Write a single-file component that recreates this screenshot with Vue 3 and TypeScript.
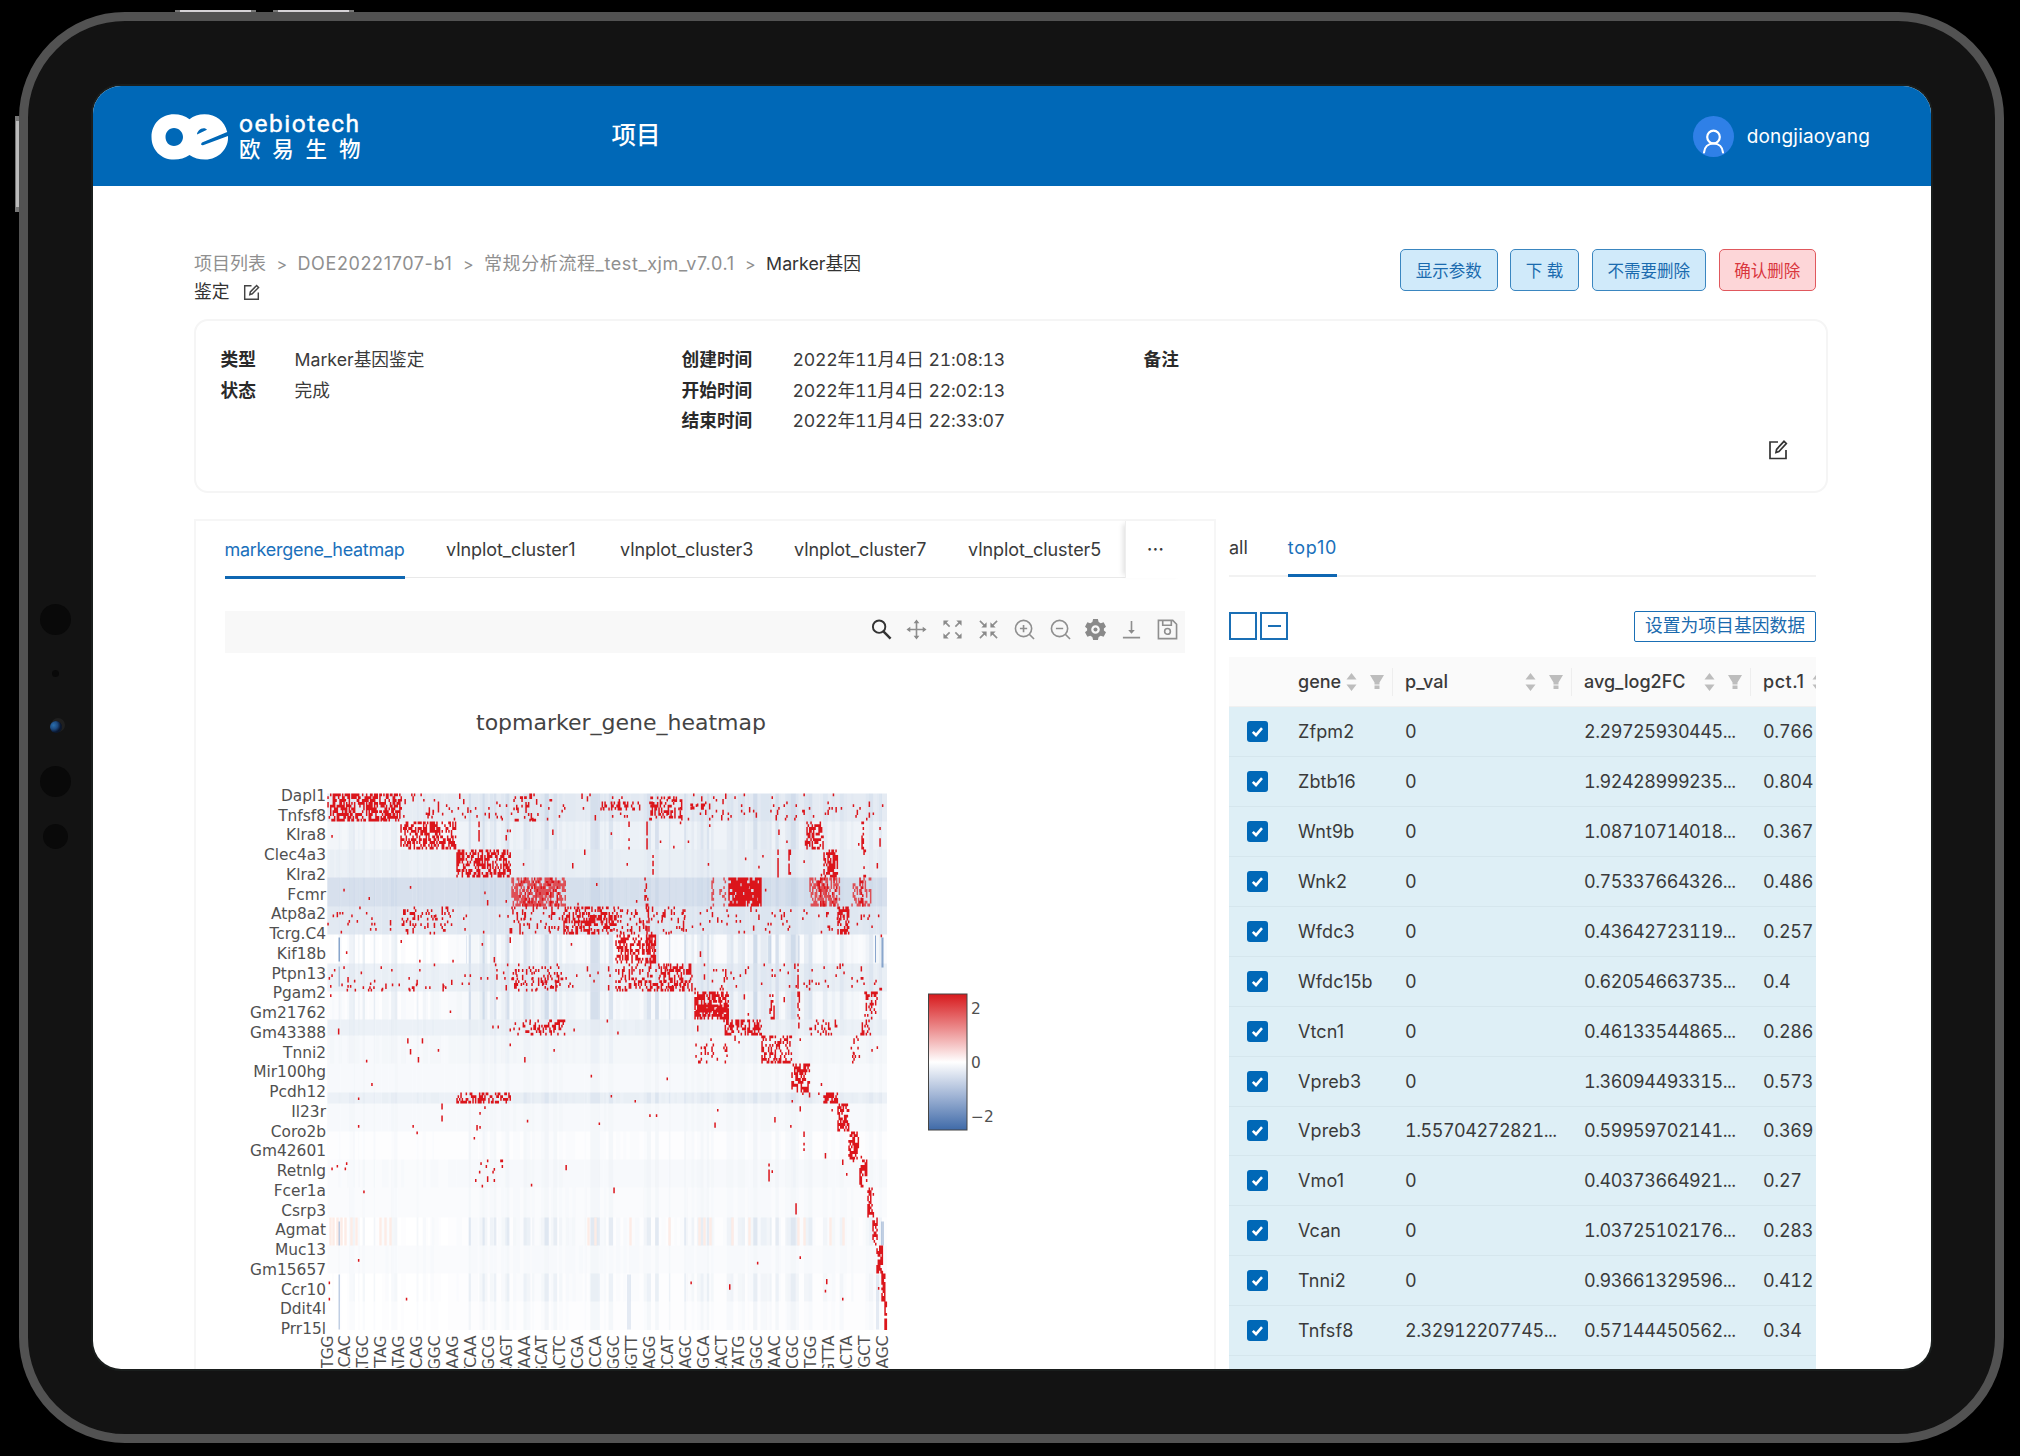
<script setup lang="ts">
interface Block { b: number; x0: number; x1: number; d: number; y0?: number; y1?: number; soft?: boolean }
interface Band { y0: number; y1: number; base: number; amp: number; noise: number }

const rows: string[][] = [
  ['Zfpm2', '0', '2.29725930445...', '0.766'],
  ['Zbtb16', '0', '1.92428999235...', '0.804'],
  ['Wnt9b', '0', '1.08710714018...', '0.367'],
  ['Wnk2', '0', '0.75337664326...', '0.486'],
  ['Wfdc3', '0', '0.43642723119...', '0.257'],
  ['Wfdc15b', '0', '0.62054663735...', '0.4'],
  ['Vtcn1', '0', '0.46133544865...', '0.286'],
  ['Vpreb3', '0', '1.36094493315...', '0.573'],
  ['Vpreb3', '1.55704272821...', '0.59959702141...', '0.369'],
  ['Vmo1', '0', '0.40373664921...', '0.27'],
  ['Vcan', '0', '1.03725102176...', '0.283'],
  ['Tnni2', '0', '0.93661329596...', '0.412'],
  ['Tnfsf8', '2.32912207745...', '0.57144450562...', '0.34'],
  ['', '', '', ''],
]
const columns = [
  { name: 'gene', cls: 'c-gene' },
  { name: 'p_val', cls: 'c-val' },
  { name: 'avg_log2FC', cls: 'c-val' },
]
const tabs = ['markergene_heatmap', 'vlnplot_cluster1', 'vlnplot_cluster3', 'vlnplot_cluster7', 'vlnplot_cluster5']
const times = [
  ['创建时间', '2022年11月4日 21:08:13'],
  ['开始时间', '2022年11月4日 22:02:13'],
  ['结束时间', '2022年11月4日 22:33:07'],
]

const yLabels = ['Dapl1', 'Tnfsf8', 'Klra8', 'Clec4a3', 'Klra2', 'Fcmr', 'Atp8a2', 'Tcrg.C4', 'Kif18b', 'Ptpn13', 'Pgam2', 'Gm21762', 'Gm43388', 'Tnni2', 'Mir100hg', 'Pcdh12', 'Il23r', 'Coro2b', 'Gm42601', 'Retnlg', 'Fcer1a', 'Csrp3', 'Agmat', 'Muc13', 'Gm15657', 'Ccr10', 'Ddit4l', 'Prr15l']
const xLabels = ['CTGG', 'ACAC', 'ATGC', 'TTAG', 'ATAG', 'ACAG', 'GGGC', 'GAAG', 'TCAA', 'GGCG', 'CAGT', 'TAAA', 'GCAT', 'ACTC', 'CCGA', 'ACCA', 'GGGC', 'GGTT', 'CAGG', 'CCAT', 'AAGC', 'AGCA', 'CACT', 'TATG', 'GGGC', 'TAAC', 'TCGC', 'GTGG', 'GTTA', 'ACTA', 'TGCT', 'AAGC']

const bands: Band[] = [
  { y0: 0, y1: 28, base: 0.12, amp: 0.1, noise: 0.045 },
  { y0: 28, y1: 56, base: 0.06, amp: 0.14, noise: 0.006 },
  { y0: 56, y1: 84, base: 0.1, amp: 0.06, noise: 0.003 },
  { y0: 84, y1: 113, base: 0.2, amp: 0.06, noise: 0.004 },
  { y0: 113, y1: 141, base: 0.15, amp: 0.04, noise: 0.04 },
  { y0: 141, y1: 170, base: 0, amp: 0.22, noise: 0.003 },
  { y0: 170, y1: 198, base: 0.09, amp: 0.12, noise: 0.04 },
  { y0: 198, y1: 226, base: 0.02, amp: 0.2, noise: 0.002 },
  { y0: 226, y1: 242, base: 0.09, amp: 0.05, noise: 0.004 },
  { y0: 242, y1: 270, base: 0.045, amp: 0.05, noise: 0.006 },
  { y0: 270, y1: 299, base: 0.035, amp: 0.03, noise: 0.001 },
  { y0: 299, y1: 310, base: 0.09, amp: 0.08, noise: 0.008 },
  { y0: 310, y1: 338, base: 0.04, amp: 0.02, noise: 0.004 },
  { y0: 338, y1: 366, base: 0.01, amp: 0.05, noise: 0.001 },
  { y0: 366, y1: 394, base: 0.03, amp: 0.04, noise: 0.004 },
  { y0: 394, y1: 424, base: 0.025, amp: 0.03, noise: 0.001 },
  { y0: 424, y1: 452, base: 0, amp: 0.15, noise: 0.0005 },
  { y0: 452, y1: 480, base: 0.03, amp: 0.02, noise: 0.001 },
  { y0: 480, y1: 508, base: 0.0, amp: 0.11, noise: 0.004 },
  { y0: 508, y1: 536.5, base: 0.0, amp: 0.06, noise: 0 },
]
const blocks: Block[] = [
  { b: 0, x0: 0, x1: 73, d: 0.62 }, { b: 0, x0: 186, x1: 213, d: 0.2 }, { b: 0, x0: 273, x1: 313, d: 0.35, y0: 8, y1: 17 },
  { b: 0, x0: 323, x1: 355, d: 0.35, y0: 3, y1: 25 }, { b: 0, x0: 323, x1: 335, d: 0.6, y0: 8, y1: 17 }, { b: 0, x0: 363, x1: 384, d: 0.4, y0: 10, y1: 16 },
  { b: 0, x0: 100, x1: 180, d: 0.1, y0: 8, y1: 25 },
  { b: 1, x0: 73, x1: 129, d: 0.52 }, { b: 1, x0: 151, x1: 152, d: 1, y0: 28, y1: 48 }, { b: 1, x0: 301, x1: 302.4, d: 0.5 },
  { b: 1, x0: 319, x1: 320.4, d: 0.9 }, { b: 1, x0: 479, x1: 496, d: 0.55 }, { b: 1, x0: 534, x1: 536, d: 0.5 }, { b: 1, x0: 552, x1: 553.4, d: 0.5 },
  { b: 2, x0: 129, x1: 184, d: 0.55 }, { b: 2, x0: 496, x1: 510, d: 0.62 }, { b: 2, x0: 450, x1: 451.4, d: 0.6 }, { b: 2, x0: 461, x1: 463, d: 0.6 },
  { b: 2, x0: 325, x1: 326, d: 0.7 }, { b: 2, x0: 536, x1: 540, d: 0.3 },
  { b: 3, x0: 184, x1: 238, d: 0.62, soft: true }, { b: 3, x0: 192, x1: 232, d: 0.25 }, { b: 3, x0: 401, x1: 434, d: 0.9 }, { b: 3, x0: 482, x1: 512, d: 0.6, soft: true },
  { b: 3, x0: 490, x1: 510, d: 0.2 },
  { b: 3, x0: 524, x1: 544, d: 0.35, soft: true }, { b: 3, x0: 532, x1: 536, d: 0.6 }, { b: 3, x0: 317, x1: 321, d: 0.4 }, { b: 3, x0: 384, x1: 386, d: 0.6, soft: true }, { b: 3, x0: 392, x1: 399, d: 0.25, soft: true },
  { b: 4, x0: 236, x1: 289, d: 0.45 }, { b: 4, x0: 289, x1: 360, d: 0.15 }, { b: 4, x0: 73, x1: 128, d: 0.16 }, { b: 4, x0: 510, x1: 522, d: 0.5 },
  { b: 4, x0: 180, x1: 236, d: 0.1 }, { b: 4, x0: 319, x1: 322, d: 0.5 },
  { b: 5, x0: 288, x1: 328, d: 0.38 }, { b: 5, x0: 318, x1: 328, d: 0.5 },
  { b: 6, x0: 328, x1: 365, d: 0.42 }, { b: 6, x0: 288, x1: 328, d: 0.28 }, { b: 6, x0: 184, x1: 236, d: 0.18 }, { b: 6, x0: 470, x1: 471.4, d: 0.6 },
  { b: 6, x0: 10, x1: 120, d: 0.12, y0: 190, y1: 198 },
  { b: 7, x0: 367, x1: 401, d: 0.6 }, { b: 7, x0: 367, x1: 401, d: 0.95, y0: 211, y1: 219 }, { b: 7, x0: 470, x1: 472, d: 0.6 },
  { b: 7, x0: 442, x1: 447, d: 0.3 }, { b: 7, x0: 537, x1: 550, d: 0.3 },
  { b: 8, x0: 186, x1: 238, d: 0.32 }, { b: 8, x0: 396, x1: 434, d: 0.45 }, { b: 8, x0: 482, x1: 510, d: 0.25 }, { b: 8, x0: 533, x1: 544, d: 0.35 },
  { b: 9, x0: 368, x1: 400, d: 0.2, y0: 250, y1: 270 }, { b: 9, x0: 434, x1: 464, d: 0.4 }, { b: 9, x0: 522, x1: 532, d: 0.16 },
  { b: 10, x0: 464, x1: 482, d: 0.6 },
  { b: 11, x0: 129, x1: 184, d: 0.55 }, { b: 11, x0: 496, x1: 510, d: 0.62 },
  { b: 12, x0: 510, x1: 522, d: 0.62 }, { b: 12, x0: 114, x1: 115.4, d: 0.6, y1: 328 }, { b: 12, x0: 152, x1: 153.4, d: 0.6 },
  { b: 13, x0: 521, x1: 532, d: 0.62 }, { b: 13, x0: 476, x1: 477.4, d: 0.5 },
  { b: 14, x0: 532, x1: 540, d: 0.55 }, { b: 14, x0: 441, x1: 442, d: 0.9, y0: 370, y1: 388 }, { b: 14, x0: 145, x1: 175, d: 0.05 },
  { b: 15, x0: 540, x1: 546, d: 0.6 }, { b: 15, x0: 468, x1: 469, d: 1, y0: 407, y1: 421 },
  { b: 16, x0: 545, x1: 550, d: 0.7 }, { b: 17, x0: 549, x1: 555, d: 0.7 }, { b: 18, x0: 554, x1: 558, d: 0.8 }, { b: 19, x0: 557, x1: 559.5, d: 0.85 },
]

let seed = 20221104
function rnd(): number {
  seed = (seed * 1664525 + 1013904223) >>> 0
  return seed / 4294967296
}
const OX = 327.3, OY = 794, CW = 1.33, RH = 2.8, W = 559.7

function cells(x0: number, x1: number, y0: number, y1: number, d: number): string {
  let s = ''
  const n = Math.max(1, Math.round((x1 - x0) / CW))
  const m = Math.max(1, Math.round((y1 - y0) / RH))
  const rh = (y1 - y0) / m
  for (let r = 0; r < m; r++) {
    for (let c = 0; c < n; c++) {
      if (rnd() < d) s += `M${(OX + x0 + c * CW).toFixed(1)} ${(OY + y0 + r * rh).toFixed(1)}h1.5v${(rh + (r < m - 1 && rnd() < 0.2 ? rh : 0)).toFixed(1)}h-1.5z`
    }
  }
  return s
}
let redPath = ''
let softPath = ''
for (const k of blocks) {
  const band = bands[k.b]
  const y1 = Math.min(k.y1 ?? band.y1, band.y1)
  const p = cells(k.x0, k.x1, k.y0 ?? band.y0, y1, k.d * 0.88)
  if (k.soft) softPath += p
  else redPath += p
}
for (const b of bands) redPath += cells(0, W - 1, b.y0, b.y1 - 1, b.noise * 0.8)

const stripes: { x: number; w: number; s: number }[] = []
for (let x = 0; x < W;) {
  const w = Math.min(1.3 + rnd() * 3.2, W - x)
  const r = rnd()
  const s = (x > 120 ? 0.12 : 0) + r * r * r * (x < 120 ? 0.55 : 1)
  stripes.push({ x, w, s })
  x += w
}
const tintPaths: string[] = Array.from({ length: 24 }, () => '')
for (const b of bands) {
  for (const t of stripes) {
    const i = Math.min(23, Math.round((b.base + b.amp * t.s) / 0.0135))
    if (i > 0) tintPaths[i] += `M${(OX + t.x).toFixed(1)} ${OY + b.y0}h${t.w.toFixed(1)}V${OY + b.y1}h${(-t.w).toFixed(1)}z`
  }
}
let pinkPath = ''
for (const x of [2, 5, 9, 13, 17, 23, 28, 52, 57, 62, 260, 267, 302, 341, 371, 376, 382, 404, 421, 470, 476, 502, 515]) {
  pinkPath += `M${OX + x} ${OY + 424}h2.4v28h-2.4z`
}
</script>

<template>
  <div class="stage">
    <i class="hw top a"></i><i class="hw top b"></i><i class="hw side"></i>
    <div class="device">
      <i class="lens l1"></i><i class="lens l2"></i><i class="cam"></i><i class="lens l3"></i><i class="lens l4"></i>
      <div class="screen">
        <header class="head">
          <div class="logo">
            <svg width="78" height="46" viewBox="0 0 78 46">
              <path fill="#fff" fill-rule="evenodd" d="M23 .3C29 .3 34 2 38.500 5.300C42.500 2 47.500.3 53.500.3C65 .3 73.500 7 76.200 18L51 28.500C49.500 30 50 31.600 52 31.200L77 22C78 34 68 45.600 54 45.600C48 45.600 43 44 38.500 41C34 44 29 45.600 23 45.600C10 45.600.5 36 .5 23S10 .3 23 .3ZM23 14C18 14 14.500 18 14.500 23S18 32 23 32S32 28 32 23S28 14 23 14ZM46 20.500L56 15.800C55 13.500 50 13.600 48 16.200C46.500 18 46 19 46 20.500Z" />
            </svg>
            <div class="brand"><b>oebiotech</b><span>欧易生物</span></div>
          </div>
          <nav>项目</nav>
          <div class="user">
            <svg width="41" height="41" viewBox="0 0 41 41"><circle cx="20.500" cy="20.500" r="20.500" fill="#2f80e7" /><g fill="none" stroke="#fff" stroke-width="2.200" stroke-linecap="round"><circle cx="20.500" cy="21" r="6.300" /><path d="M11 36.500C11.500 31 15 27.500 20.500 27.500S29.500 31 30 36.500" /></g></svg>
            <span>dongjiaoyang</span>
          </div>
        </header>

        <main>
          <div class="topline">
            <div class="crumbs">
              <div><span>项目列表</span><i>&gt;</i><span class="c2">DOE20221707-b1</span><i>&gt;</i><span class="c3">常规分析流程_test_xjm_v7.0.1</span><i>&gt;</i><em>Marker基因</em></div>
              <div><em>鉴定</em><svg class="edit" width="17" height="17" viewBox="0 0 20 20"><path d="M10 2H2V18H18V10M8 12.500L8.600 9.300L16 1.800L18.300 4L10.900 11.500Z" /></svg></div>
            </div>
            <div class="btns">
              <button class="w98">显示参数</button><button class="w69">下 载</button><button class="w115">不需要删除</button><button class="w98 red">确认删除</button>
            </div>
          </div>

          <section class="info">
            <dl class="i1"><div><dt>类型</dt><dd>Marker基因鉴定</dd></div><div><dt>状态</dt><dd>完成</dd></div></dl>
            <dl class="i2"><div v-for="t in times" :key="t[0]"><dt>{{ t[0] }}</dt><dd>{{ t[1] }}</dd></div></dl>
            <dl class="i3"><div><dt>备注</dt></div></dl>
            <svg class="edit big" width="20" height="20" viewBox="0 0 20 20"><path d="M10 2H2V18.500H18V10M8 12.500L8.600 9.300L16 1.300L18.300 3.500L10.900 11.500Z" /></svg>
          </section>

          <div class="cols">
            <section class="plot">
              <div class="tabs">
                <span v-for="(t, i) in tabs" :key="t" :class="{ on: i === 0 }">{{ t }}</span>
                <div class="more">···</div>
              </div>
              <div class="tools">
                <svg class="dark" viewBox="0 0 22 22"><circle cx="8.500" cy="8" r="6.500" /><path d="M13 13L20.500 20.500" stroke-width="2.600" /></svg>
                <svg viewBox="0 0 22 22"><path d="M11 2V20M2 11H20" /><path class="f" d="M11 .5L14 4.500H8ZM11 21.500L14 17.500H8ZM.5 11L4.500 8V14ZM21.500 11L17.500 8V14Z" /></svg>
                <svg viewBox="0 0 22 22"><path d="M3 3L8 8M19 3L14 8M3 19L8 14M19 19L14 14" /><path class="f" d="M1.500 1.500H7L1.500 7ZM20.500 1.500H15L20.500 7ZM1.500 20.500H7L1.500 15ZM20.500 20.500H15L20.500 15Z" /></svg>
                <svg viewBox="0 0 22 22"><path d="M2 2L7 7M20 2L15 7M2 20L7 15M20 20L15 15" /><path class="f" d="M9 9H3.500L9 3.500ZM13 9H18.500L13 3.500ZM9 13H3.500L9 18.500ZM13 13H18.500L13 18.500Z" /></svg>
                <svg viewBox="0 0 22 22"><circle cx="10" cy="10" r="8.500" /><path d="M16 16L21 21M10 6.200V13.800M6.200 10H13.800" /></svg>
                <svg viewBox="0 0 22 22"><circle cx="10" cy="10" r="8.500" /><path d="M16 16L21 21M6.200 10H13.800" /></svg>
                <svg viewBox="0 0 22 22"><path class="f" fill-rule="evenodd" d="M8.500 0H13.500L14.300 3.200L16.500 4.400L19.500 3.500L22 8L19.800 10V12L22 14L19.500 18.500L16.500 17.600L14.300 18.800L13.500 22H8.500L7.700 18.800L5.500 17.600L2.500 18.500L0 14L2.200 12V10L0 8L2.500 3.500L5.500 4.400L7.700 3.200ZM11 6.500A4.500 4.500 0 1 0 11 15.500A4.500 4.500 0 1 0 11 6.500Z" /><circle cx="11" cy="11" r="2.100" class="f" /></svg>
                <svg viewBox="0 0 22 22"><path d="M11 2V13M2 19.500H20" /><path class="f" d="M7.500 11.500H14.500L11 15.500Z" /></svg>
                <svg viewBox="0 0 22 22"><path d="M1.500 1.500H16.500L20.500 5.500V20.500H1.500ZM6 1.500V6.500H15V1.500" /><circle cx="11" cy="13" r="3" /></svg>
              </div>
              <svg class="chart" width="960" height="715" viewBox="225 653.500 960 715">
                <text x="621" y="730.300" class="ttl" text-anchor="middle" textLength="290">topmarker_gene_heatmap</text>
                <g fill="#3a69a8"><path v-for="(p, i) in tintPaths" :key="i" :d="p" :opacity="i * 0.0135" /></g>
                <path :d="pinkPath" fill="#fdece6" />
                <path d="M338.500 938h1.500v24h-1.500zM881.500 938h2v30h-2zM875 936h1v27h-1z" fill="#4f79b3" opacity=".65" />
                <path d="M338.500 967h1.500v20h-1.500zM338.500 1275h1.500v55h-1.500zM338.500 1222h1.500v24h-1.500zM881 1222h3v24h-3z" fill="#4f79b3" opacity=".35" />
                <path d="M627 1275h4v55h-4zM466 936h1v28h-1zM798 936h2v28h-2zM768 936h3v28h-3zM876 1275h3v55h-3z" fill="#4f79b3" opacity=".14" />
                <path :d="softPath" fill="#df3035" opacity=".82" />
                <path :d="redPath" fill="#db151b" />
                <text v-for="(t, i) in yLabels" :key="t" class="lab" x="326" :y="801.500 + i * 19.740" text-anchor="end">{{ t }}</text>
                <text v-for="(t, i) in xLabels" :key="i" class="lab" text-anchor="end" :transform="`translate(${332.500 + i * 17.910} 1336) rotate(-90)`">{{ t }}</text>
                <defs><linearGradient id="scale" x1="0" y1="0" x2="0" y2="1"><stop offset="0" stop-color="#d7191c" /><stop offset=".25" stop-color="#eb8a8b" /><stop offset=".5" stop-color="#fff" /><stop offset=".75" stop-color="#a0b4d5" /><stop offset="1" stop-color="#3f6aa8" /></linearGradient></defs>
                <rect x="928.500" y="994.500" width="38.500" height="136" fill="url(#scale)" stroke="#444" />
                <text class="lab" x="971" y="1014">2</text><text class="lab" x="971" y="1068">0</text><text class="lab" x="971" y="1122">−2</text>
              </svg>
            </section>

            <section class="data">
              <div class="tabs2"><span>all</span><span class="on">top10</span></div>
              <div class="acts"><i class="box"></i><i class="box m"></i><button>设置为项目基因数据</button></div>
              <div class="table">
                <div class="tr th">
                  <div class="c-chk"></div>
                  <div v-for="c in columns" :key="c.name" :class="c.cls">
                    <span>{{ c.name }}</span>
                    <svg width="38" height="20" viewBox="0 0 38 20"><path d="M5.500 1L10.500 7.500H.5ZM5.500 19L10.500 12.500H.5ZM24 3H38L33.500 10.500V17H28.500V10.500Z" /><path d="M28 13H34" stroke="#fafafa" /></svg>
                  </div>
                  <div class="c-pct"><span>pct.1</span><svg width="11" height="20" viewBox="0 0 11 20"><path d="M5.500 1L10.500 7.500H.5ZM5.500 19L10.500 12.500H.5Z" /></svg></div>
                </div>
                <div v-for="(r, i) in rows" :key="i" class="tr">
                  <div class="c-chk"><i><svg width="21" height="21" viewBox="0 0 21 21"><path d="M5.800 10.800L9 14L15 7.200" fill="none" stroke="#fff" stroke-width="2.600" /></svg></i></div>
                  <div class="c-gene">{{ r[0] }}</div><div class="c-val num">{{ r[1] }}</div><div class="c-val num">{{ r[2] }}</div><div class="c-pct num">{{ r[3] }}</div>
                </div>
              </div>
            </section>
          </div>
        </main>
      </div>
    </div>
  </div>
</template>

<style>
html, body { margin: 0; background: #000; overflow: hidden; }
</style>

<style scoped>
* { box-sizing: border-box; }
i, em { font-style: normal; }
.stage { position: relative; width: 2020px; height: 1456px; padding: 12px 16px 0 19px; background: #000; font-family: Inter, "Noto Sans CJK SC", sans-serif; color: #3a3a3a; font-size: 18px; overflow: hidden; }
.hw { position: absolute; background: #d5d2d6; border: solid #777; }
.hw.top { top: 10px; width: 81px; height: 3px; border-width: 0 5px; }
.hw.a { left: 175px; }
.hw.b { left: 273px; }
.hw.side { left: 15px; top: 116px; width: 4px; height: 96px; border-width: 5px 0 5px 1px; background: #bbb; }
.device { position: relative; width: 1985px; height: 1431px; border: 9px solid #525252; border-radius: 106px; background: #131313; padding: 65px 0 0 65px; }
.lens { position: absolute; border-radius: 50%; background: #090909; }
.l1 { left: 12px; top: 582.500px; width: 31px; height: 31px; }
.l2 { left: 24px; top: 649px; width: 7px; height: 7px; }
.l3 { left: 12px; top: 745px; width: 31px; height: 31px; }
.l4 { left: 15px; top: 802.500px; width: 25px; height: 25px; }
.cam { position: absolute; left: 22px; top: 700px; width: 12px; height: 12px; border-radius: 50%; background: radial-gradient(circle at 30% 35%, #2a6fae 0, #1d4a80 35%, #0a1730 62%, #131a22 100%); box-shadow: 2px -2px 0 1px #1f1f1f; }
.screen { width: 1838px; height: 1283px; border-radius: 28px; background: #fff; overflow: hidden; box-shadow: 0 0 0 2px #1a1e1d; }
.head { height: 99.500px; background: #0068b7; color: #fff; display: flex; align-items: center; padding: 2px 61px 0 58px; }
.logo { display: flex; width: 460.500px; gap: 10px; align-items: center; }
.brand { display: flex; flex-direction: column; width: 130px; height: 51px; }
.brand b { font: 400 24.500px/25px Roboto; letter-spacing: 1.500px; -webkit-text-stroke: .4px #fff; }
.brand span { font-size: 21.500px; line-height: 26px; letter-spacing: 11.800px; font-weight: 500; white-space: nowrap; }
nav { font-size: 24.500px; font-weight: 500; flex: 1; margin-top: -6px; }
.user { display: flex; align-items: center; gap: 13px; font-size: 19px; letter-spacing: .2px; }
main { padding: 64.500px 103px 0 101px; }
.topline { display: flex; justify-content: space-between; height: 69px; padding-right: 12px; }
.crumbs { line-height: 28px; color: #8f8f8f; white-space: nowrap; }
.crumbs div { display: flex; align-items: center; }
.crumbs em { color: #333; font-size: 17.800px; }
.crumbs i { width: 31.500px; text-align: center; font-size: 16px; }
.c2 { letter-spacing: .62px; }
.c3 { letter-spacing: .6px; }
.edit { fill: none; stroke: #444; stroke-width: 1.700; margin-left: 13px; }
.btns { display: flex; gap: 12.500px; }
button { font-family: inherit; padding: 0; }
.btns button { height: 41.500px; border: 1.500px solid #3a86c0; border-radius: 5px; background: #d0eafa; color: #1a6aae; font-size: 16.500px; margin-top: -1px; white-space: nowrap; }
.w98 { width: 97.500px; } .w69 { width: 69px; } .w115 { width: 114.500px; }
.btns .red { background: #fdd6d8; border-color: #e0585d; color: #d9363e; }
.info { height: 174px; border: 2px solid #f5f5f5; border-radius: 14px; display: flex; padding-top: 24px; position: relative; }
dl { margin: 0; padding-left: 24.500px; }
dl div { display: flex; height: 30.500px; line-height: 30px; }
dt { font-weight: 600; color: #2a2a2a; font-size: 17.700px; }
dd { margin: 0; font-size: 17.700px; }
.i1 { width: 461px; } .i1 dt { width: 74px; }
.i2 { width: 462px; } .i2 dt { width: 111px; } .i2 dd { letter-spacing: -.2px; font-variant-numeric: tabular-nums; }
.big { position: absolute; right: 38px; bottom: 31px; stroke: #333; }
.cols { display: flex; padding-top: 26px; height: 900px; }
.plot { width: 1022px; border: 2px solid #f6f6f6; padding: 0 29px 0 28.500px; }
.tabs { display: flex; height: 57px; border-bottom: 1px solid #e9e9e9; gap: 42px; position: relative; line-height: 58px; white-space: nowrap; }
.tabs span, .tabs2 span { position: relative; }
.tabs span { width: 132px; letter-spacing: -.06px; left: -.5px; }
.tabs .on { width: 180px; letter-spacing: -.28px; left: 0; }
.on { color: #1a70bb; }
.on::after { content: ""; position: absolute; left: 0; right: 0; bottom: -2px; height: 3px; background: #0f67b2; }
.more { position: absolute; right: 0; top: 0; width: 60px; height: 57px; background: #fff; box-shadow: -5px 0 5px -3px rgba(0, 0, 0, .12); text-align: center; font-size: 20px; line-height: 56px; border-left: 1px solid #eee; }
.tools { margin-top: 33px; height: 42px; background: #f8f8f8; display: flex; justify-content: flex-end; align-items: center; gap: 14.800px; padding: 0 7px 6px 0; }
.tools svg { width: 21px; height: 21px; fill: none; stroke: #8f8f8f; stroke-width: 1.700; }
.tools svg.dark { stroke: #333; stroke-width: 2; }
.tools .f { fill: #8a8a8a; stroke: none; }
.chart { display: block; }
.ttl { font: 22px "DejaVu Sans"; fill: #444; }
.lab { font: 15.400px "DejaVu Sans"; fill: #505050; }
.data { width: 587px; margin-left: 13px; }
.tabs2 { display: flex; gap: 40px; height: 58px; line-height: 57px; border-bottom: 2px solid #f2f2f2; }
.tabs2 .on { letter-spacing: .75px; }
.acts { display: flex; align-items: center; height: 28px; margin-top: 35px; gap: 3px; }
.box { width: 28px; height: 28px; border: 2px solid #1a6fb5; display: flex; align-items: center; justify-content: center; }
.m::after { content: ""; width: 13px; height: 2px; background: #1a6fb5; }
.acts button { margin-left: auto; width: 182px; height: 31px; border: 1.500px solid #1a6fb5; border-radius: 2px; background: #fff; color: #1a6aae; font-size: 17.800px; line-height: 26px; white-space: nowrap; }
.table { margin-top: 17.400px; width: 587px; overflow: hidden; }
.tr { width: 620px; height: 49.900px; display: flex; align-items: center; background: #deeff6; border-bottom: 1.500px solid #d5e6ed; }
.th { height: 50px; background: #fafafa; border-bottom: 1px solid #f0f0f0; font-weight: 500; }
.tr > div { white-space: nowrap; flex: none; }
.c-chk { width: 69px; padding-left: 18px; }
.c-chk i { display: block; width: 21px; height: 21px; background: #0068b7; border-radius: 3px; }
.c-chk svg { display: block; }
.c-gene { width: 107px; letter-spacing: .1px; }
.c-val { width: 179px; }
.c-pct { width: 80px; }
.num { font-variant-numeric: tabular-nums; letter-spacing: -.48px; }
.c-pct.num { letter-spacing: -.3px; }
.th > div { display: flex; align-items: center; height: 28px; justify-content: space-between; }
.th svg { fill: #bdbdbd; }
.th .c-gene, .th .c-val { border-right: 1px solid #eee; margin-right: 12px; padding-right: 8.500px; }
.th .c-gene { width: 95px; letter-spacing: 0; }
.th .c-val { width: 167px; }
.th .c-pct { justify-content: flex-start; gap: 7px; letter-spacing: .5px; }
</style>
